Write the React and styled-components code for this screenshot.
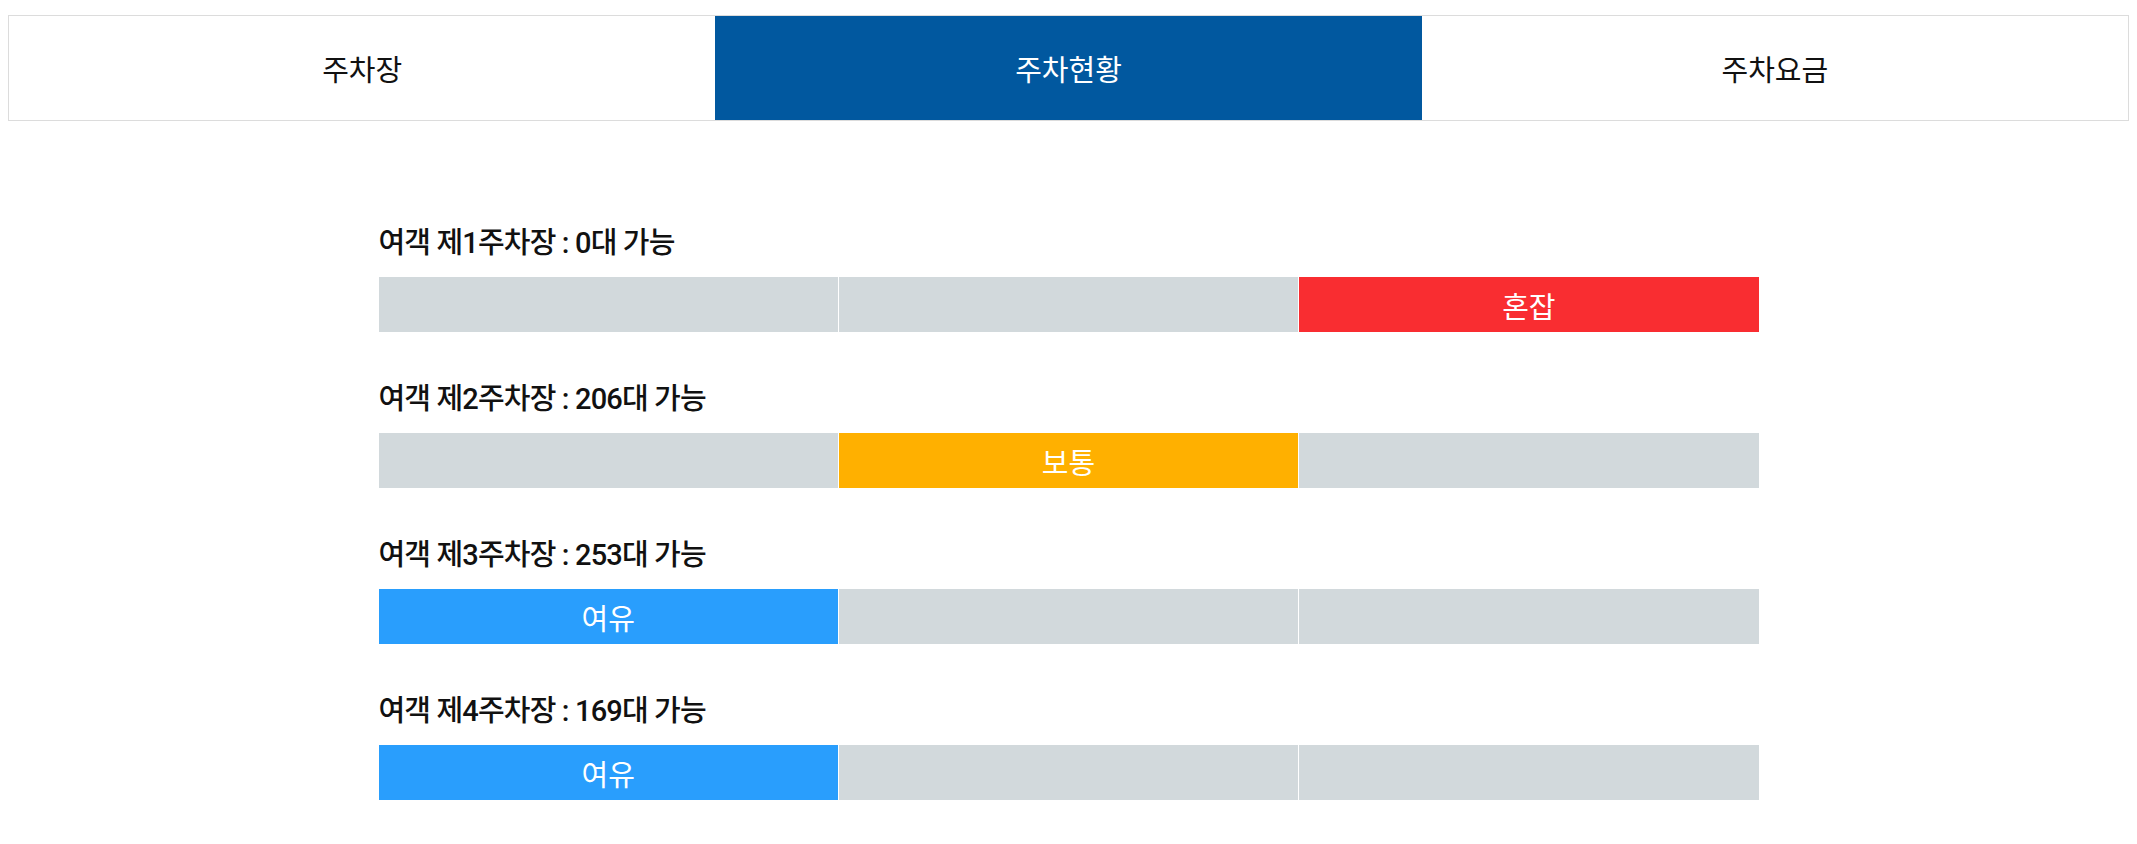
import React from "react";
import styled, { createGlobalStyle } from "styled-components";

const GlobalStyle = createGlobalStyle`
  html, body {
    margin: 0;
    padding: 0;
    background: #fff;
  }
  body {
    font-family: "Noto Sans CJK KR", "Noto Sans", sans-serif;
    color: #111;
  }
`;

const Page = styled.div`
  padding: 15px 8px 40px;
`;

const TabBar = styled.div`
  display: grid;
  grid-template-columns: repeat(3, 1fr);
  height: 106px;
  border: 1px solid #dcdcdc;
  box-sizing: border-box;
`;

const Tab = styled.div`
  display: flex;
  align-items: center;
  justify-content: center;
  font-size: 29px;
  font-weight: 400;
  color: ${({ $active }) => ($active ? "#fff" : "#111")};
  background: ${({ $active }) => ($active ? "#01589f" : "#fff")};
`;

const Status = styled.div`
  width: 1380px;
  margin: 104px auto 0;
  display: flex;
  flex-direction: column;
  gap: 49px;
`;

const Lot = styled.div`
  display: flex;
  flex-direction: column;
  gap: 16px;
`;

const LotTitle = styled.div`
  font-family: Roboto, "Noto Sans CJK KR", sans-serif;
  font-size: 29px;
  font-weight: 500;
  line-height: 36px;
  letter-spacing: -0.85px;
  color: #111;
`;

const Meter = styled.div`
  display: grid;
  grid-template-columns: repeat(3, 1fr);
  gap: 1px;
  height: 55px;
`;

const levelColor = {
  여유: "#299efd",
  보통: "#ffb000",
  혼잡: "#f92d31",
};

const Segment = styled.div`
  display: flex;
  align-items: center;
  justify-content: center;
  font-size: 29px;
  font-weight: 400;
  color: #fff;
  background: ${({ $level }) => ($level ? levelColor[$level] : "#d2d9dc")};
`;

const tabs = ["주차장", "주차현황", "주차요금"];
const order = ["여유", "보통", "혼잡"];

const lots = [
  { name: "여객 제1주차장", count: 0, level: "혼잡" },
  { name: "여객 제2주차장", count: 206, level: "보통" },
  { name: "여객 제3주차장", count: 253, level: "여유" },
  { name: "여객 제4주차장", count: 169, level: "여유" },
];

export default function App() {
  return (
    <Page>
      <GlobalStyle />
      <TabBar>
        {tabs.map((t, i) => (
          <Tab key={t} $active={i === 1}>
            {t}
          </Tab>
        ))}
      </TabBar>
      <Status>
        {lots.map((lot) => (
          <Lot key={lot.name}>
            <LotTitle>
              {lot.name} : {lot.count}대 가능
            </LotTitle>
            <Meter>
              {order.map((lv) => (
                <Segment key={lv} $level={lv === lot.level ? lv : null}>
                  {lv === lot.level ? lv : ""}
                </Segment>
              ))}
            </Meter>
          </Lot>
        ))}
      </Status>
    </Page>
  );
}
